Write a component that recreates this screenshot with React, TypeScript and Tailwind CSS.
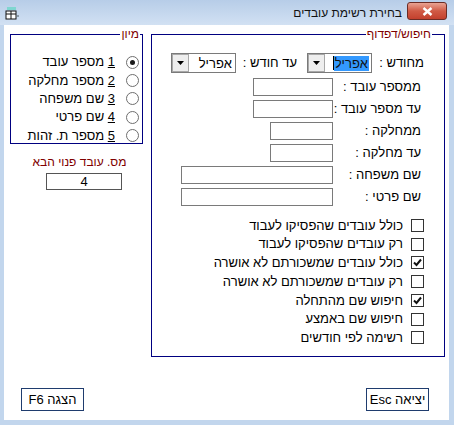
import React from "react";

const font = { fontFamily: '"Liberation Sans", "DejaVu Sans", Arial, sans-serif' };

function Radio({ checked }: { checked?: boolean }) {
    return (
        <span className="w-[13px] h-[13px] rounded-full border border-[#6e6e6e] bg-white flex items-center justify-center shrink-0">
            {checked && <span className="w-[5px] h-[5px] rounded-full bg-[#1a1a1a]" />}
        </span>
    );
}

function Check({ checked }: { checked?: boolean }) {
    return (
        <span className="w-[13px] h-[13px] border border-[#333] bg-white flex items-center justify-center shrink-0">
            {checked && (
                <svg width="9" height="9" viewBox="0 0 9 9">
                    <path d="M1 4.5 L3.5 7 L8 1.5" stroke="#111" strokeWidth="2" fill="none" />
                </svg>
            )}
        </span>
    );
}

function Combo({ value, selected }: { value: string; selected?: boolean }) {
    return (
        <div className="w-[65px] h-[20px] border border-[#7a7a7a] bg-white flex items-center">
            <div className="flex-1 flex items-center pr-[2px]">
                <span className={selected ? "bg-[#3399ff] text-[#111] leading-[15px] px-[1px]" : "leading-[15px] px-[1px]"}>{value}</span>
                {selected && <span className="w-px h-[14px] bg-black" />}
            </div>
            <div className="w-[17px] h-[18px] bg-[#eeeeee] border border-[#a8a8a8] flex items-center justify-center">
                <svg width="7" height="4" viewBox="0 0 7 4">
                    <path d="M0 0 H7 L3.5 4 Z" fill="#000" />
                </svg>
            </div>
        </div>
    );
}

function Field({ label, width }: { label: string; width: string }) {
    return (
        <div className="flex items-center h-[18px] mb-[4px]">
            <span className="w-[88px]">{label}</span>
            <div className={`${width} h-[18px] border border-[#7a7a7a] bg-white`} />
        </div>
    );
}

const sorts = [
    ["1", " מספר עובד", true],
    ["2", " מספר מחלקה", false],
    ["3", " שם משפחה", false],
    ["4", " שם פרטי", false],
    ["5", " מספר ת. זהות", false],
] as const;

const checks: [string, boolean][] = [
    ["כולל עובדים שהפסיקו לעבוד", false],
    ["רק עובדים שהפסיקו לעבוד", false],
    ["כולל עובדים שמשכורתם לא אושרה", true],
    ["רק עובדים שמשכורתם לא אושרה", false],
    ["חיפוש שם מהתחלה", true],
    ["חיפוש שם באמצע", false],
    ["רשימה לפי חודשים", false],
];

export default function App() {
    return (
        <div className="w-[454px] h-[425px] bg-[#c2d6ed] flex flex-col text-[13px] text-black" style={font}>
            {/* Title bar */}
            <div className="h-[25px] flex items-center bg-gradient-to-b from-[#b7cde8] to-[#d2e1f3]">
                <svg className="ml-[5px] mt-[2px]" width="16" height="14" viewBox="0 0 16 14">
                    <rect x="2" y="0" width="9" height="3" fill="#7fd6d0" />
                    <rect x="1" y="4" width="10" height="8" fill="#fff" stroke="#111" />
                    <path d="M1 7 H11 M6 4 V12" stroke="#111" />
                    <rect x="12" y="8" width="2" height="2" fill="#8a9aa8" />
                </svg>
                <div className="flex-1" />
                <span className="text-[12px] mr-[5px] text-[#111]">בחירת רשימת עובדים</span>
                <div className="w-[40px] h-[18px] mr-[7px] mb-[3px] rounded-[3px] border border-[#6b2c25] bg-gradient-to-b from-[#e8a393] via-[#d05a45] to-[#c3402d] flex items-center justify-center">
                    <svg width="11" height="9" viewBox="0 0 11 9">
                        <path d="M1.5 1 L9.5 8 M9.5 1 L1.5 8" stroke="#fff" strokeWidth="2.4" />
                    </svg>
                </div>
            </div>

            {/* Client area */}
            <div className="flex-1 flex pl-[4px] pr-[5px] pb-[5px]">
                <div className="flex-1 bg-white flex flex-col" dir="rtl">
                    <div className="flex pt-[9px]">
                        {/* Search panel */}
                        <div className="relative w-[294px] h-[323px] mr-[4px] border border-[#000080] flex flex-col">
                            <span className="absolute -top-[8px] right-[12px] bg-white px-[1px] text-[12px] leading-[14px] text-[#800000]">חיפוש/דפדוף</span>
                            <div className="flex items-center mt-[18px] pr-[20px] h-[20px]">
                                <span className="w-[52px]">מחודש :</span>
                                <Combo value="אפריל" selected />
                                <span className="w-[71px] pr-[10px]">עד חודש :</span>
                                <Combo value="אפריל" />
                            </div>
                            <div className="flex flex-col mt-[5px] pr-[23px]">
                                <Field label="ממספר עובד :" width="w-[80px]" />
                                <Field label="עד מספר עובד :" width="w-[80px]" />
                                <Field label="ממחלקה :" width="w-[63px]" />
                                <Field label="עד מחלקה :" width="w-[63px]" />
                                <Field label="שם משפחה :" width="w-[152px]" />
                                <Field label="שם פרטי :" width="w-[152px]" />
                            </div>
                            <div className="flex flex-col mt-[6px] pr-[20px]">
                                {checks.map(([t, c]) => (
                                    <div key={t} className="flex items-center h-[18.75px] gap-[8px]">
                                        <Check checked={c} />
                                        <span>{t}</span>
                                    </div>
                                ))}
                            </div>
                        </div>

                        {/* Left column */}
                        <div className="w-[133px] mr-[8px] flex flex-col">
                            <div className="relative h-[110px] border border-[#000080] pt-[18px] pr-[3px]">
                                <span className="absolute -top-[8px] right-[2px] bg-white px-[1px] text-[12px] leading-[14px] text-[#800000]">מיון</span>
                                {sorts.map(([n, t, c]) => (
                                    <div key={n} className="flex items-center h-[18.3px] gap-[11px]">
                                        <Radio checked={c} />
                                        <span>
                                            <span className="underline">{n}</span>
                                            {t}
                                        </span>
                                    </div>
                                ))}
                            </div>
                            <span className="text-center text-[12px] text-[#800000] mt-[11px] leading-[15px] pl-[6px]">מס. עובד פנוי הבא</span>
                            <div className="w-[76px] h-[17px] mt-[3px] mr-[21px] border border-[#555] flex items-center justify-center leading-[14px]">4</div>
                        </div>
                    </div>

                    {/* Buttons */}
                    <div className="mt-auto mb-[9px] flex justify-between pr-[20px] pl-[17px]">
                        <div className="w-[63px] h-[23px] border border-[#1f3c6e] flex items-center justify-center">יציאה Esc</div>
                        <div className="w-[63px] h-[23px] border border-[#1f3c6e] flex items-center justify-center">הצגה F6</div>
                    </div>
                </div>
            </div>
        </div>
    );
}
